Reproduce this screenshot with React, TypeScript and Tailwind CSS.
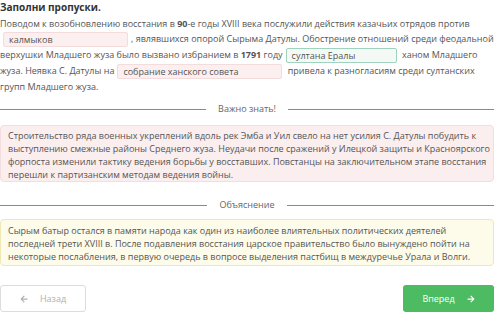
import { FaArrowLeft, FaArrowRight } from "react-icons/fa";

function Blank({ text, tone, width }: { text: string; tone: "red" | "green"; width: string }) {
  const cls =
    tone === "red"
      ? "bg-[#fcefef] border-[#f4dcdc]"
      : "bg-[#f4f9f6] border-[#9fd3bd]";
  return (
    <span
      className={`inline-block align-middle h-[15px] leading-[13px] px-[5px] mx-[3px] border rounded-[2px] text-[#555] ${cls} ${width}`}
    >
      {text}
    </span>
  );
}

function Divider({ label }: { label: string }) {
  return (
    <div className="flex items-center gap-[12px] text-[#666] leading-[12px]">
      <div className="flex-1 h-px bg-[#8a8a8a]" />
      <span>{label}</span>
      <div className="flex-1 h-px bg-[#8a8a8a]" />
    </div>
  );
}

export default function App() {
  return (
    <div className="w-[494px] h-[317px] bg-white text-[9px] text-[#555] font-['Open_Sans',sans-serif] overflow-hidden">
      <div className="font-bold text-[10px] text-[#333] leading-[12px] pt-[1px]">Заполни пропуски.</div>

      <p className="mt-[3px] leading-[15px] whitespace-nowrap">
        Поводом к возобновлению восстания в <b>90</b>-е годы XVIII века послужили действия казачьих отрядов против
        <br />
        <Blank text="калмыков" tone="red" width="w-[125px]" />, являвшихся опорой Сырыма Датулы. Обострение отношений среди феодальной
        <br />
        верхушки Младшего жуза было вызвано избранием в <b>1791</b> году
        <Blank text="султана Ералы" tone="green" width="w-[111px]" /> ханом Младшего
        <br />
        жуза. Неявка С. Датулы на
        <Blank text="собрание ханского совета" tone="red" width="w-[165px]" /> привела к разногласиям среди султанских
        <br />
        групп Младшего жуза.
      </p>

      <div className="mt-[9px]">
        <Divider label="Важно знать!" />
      </div>

      <div className="mt-[10px] bg-[#fbeeee] border border-[#f3dddd] rounded-[4px] px-[7px] pt-[3px] pb-0 leading-[13px] whitespace-nowrap">
        Строительство ряда военных укреплений вдоль рек Эмба и Уил свело на нет усилия С. Датулы побудить к
        <br />
        выступлению смежные районы Среднего жуза. Неудачи после сражений у Илецкой защиты и Красноярского
        <br />
        форпоста изменили тактику ведения борьбы у восставших. Повстанцы на заключительном этапе восстания
        <br />
        перешли к партизанским методам ведения войны.
      </div>

      <div className="mt-[17px]">
        <Divider label="Объяснение" />
      </div>

      <div className="mt-[8px] bg-[#fdfbea] border border-[#efe7b6] rounded-[4px] px-[7px] pt-[4px] pb-[2px] leading-[13px] whitespace-nowrap">
        Сырым батыр остался в памяти народа как один из наиболее влиятельных политических деятелей
        <br />
        последней трети XVIII в. После подавления восстания царское правительство было вынуждено пойти на
        <br />
        некоторые послабления, в первую очередь в вопросе выделения пастбищ в междуречье Урала и Волги.
      </div>

      <div className="mt-[19px] flex justify-between">
        <button className="w-[86px] h-[27px] border border-[#dcdcdc] rounded-[3px] bg-white flex items-center justify-center gap-[12px] text-[#b0b0b0] text-[9px]">
          <FaArrowLeft size={8} />
          Назад
        </button>
        <button className="w-[91px] h-[27px] rounded-[3px] bg-[#4dbb62] flex items-center justify-center gap-[12px] text-white text-[9px]">
          Вперед
          <FaArrowRight size={8} />
        </button>
      </div>
    </div>
  );
}
